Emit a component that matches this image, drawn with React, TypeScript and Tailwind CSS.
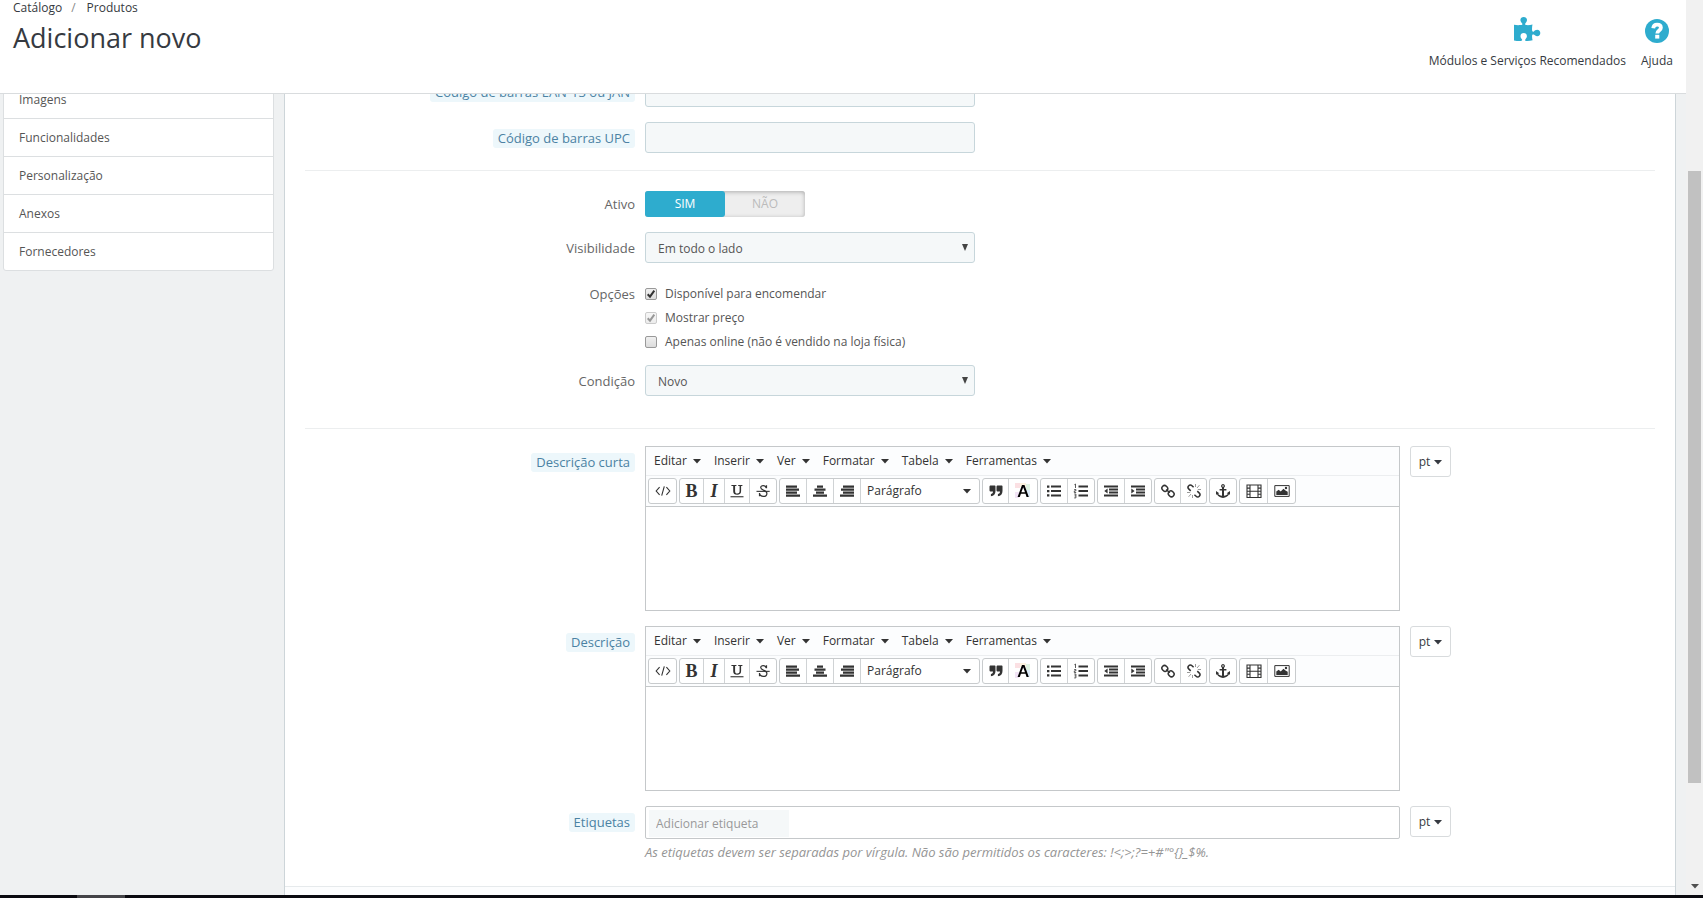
import { ReactNode, useState } from "react";
import clsx from "clsx";

const sidebarTabs = ["Imagens", "Funcionalidades", "Personalização", "Anexos", "Fornecedores"];
const editorMenus = ["Editar", "Inserir", "Ver", "Formatar", "Tabela", "Ferramentas"];

function Caret() {
  return (
    <svg width="8" height="5" viewBox="0 0 8 5" fill="currentColor" aria-hidden="true">
      <path d="M0 0h8L4 4.6z" />
    </svg>
  );
}

function Icon({ children }: { children: ReactNode }) {
  return (
    <svg width="16" height="16" viewBox="0 0 16 16" fill="currentColor" aria-hidden="true">
      {children}
    </svg>
  );
}

const icons = {
  code: (
    <Icon>
      <path d="M4.6 4.2 1.2 8l3.4 3.8M11.4 4.2 14.8 8l-3.4 3.8M9.3 3.4 6.7 12.6" fill="none" stroke="currentColor" strokeWidth="1.1" />
    </Icon>
  ),
  underline: (
    <Icon>
      <path d="M2.4 2h5v.9l-1.3.2v5.1c0 1.7.7 2.4 2.2 2.4s2.3-.8 2.3-2.5V3.1l-1.4-.2V2h4.2v.9l-1.3.2v5c0 2.5-1.3 3.7-3.9 3.7-2.7 0-4-1.1-4-3.5V3.1l-1.8-.2z" />
      <path d="M1.5 13.2h13v1.1h-13z" />
    </Icon>
  ),
  strike: (
    <Icon>
      <path d="M11.3 5.2c-.4-1.7-1.4-2.6-3.1-2.6-1.5 0-2.5.8-2.5 2 0 1.3 1 1.9 2.7 2.5 2.2.8 3.5 1.6 3.5 3.3 0 1.8-1.5 3-3.6 3-2 0-3.5-1.1-3.8-3.2M11.5 2.2v3M4.5 10v3.2" fill="none" stroke="currentColor" strokeWidth="1.2" />
      <path d="M1.5 7.8h13.2v1.1H1.5z" />
    </Icon>
  ),
  left: (
    <Icon>
      <path d="M1 2.5h11v2.2H1zM1 5.500h13v2.200H1zM1 8.500h11v2.200H1zM1 11.500h14v2.200H1z" />
    </Icon>
  ),
  center: (
    <Icon>
      <path d="M5 2.500h6v2.200H5zM2.500 5.500h11v2.200h-11zM4 8.500h8v2.200H4zM1 11.500h14v2.200H1z" />
    </Icon>
  ),
  right: (
    <Icon>
      <path d="M4 2.500h11v2.200H4zM2 5.500h13v2.200H2zM4 8.500h11v2.200H4zM1 11.500h14v2.200H1z" />
    </Icon>
  ),
  quote: (
    <Icon>
      <path d="M2.800 2.500h3.700c.6 0 1 .4 1 1v4.600c0 3-1.700 5-4.600 5.200V11c1.400-.2 2.100-.9 2.100-2.400H2.800c-.8 0-1.300-.5-1.300-1.300V3.800c0-.8.5-1.300 1.300-1.300zM9.800 2.500h3.700c.6 0 1 .4 1 1v4.600c0 3-1.700 5-4.600 5.200V11c1.400-.2 2.100-.9 2.100-2.400H9.800c-.8 0-1.300-.5-1.300-1.300V3.800c0-.8.500-1.300 1.300-1.300z" />
    </Icon>
  ),
  color: (
    <Icon>
      <path d="M0 0h5v5H0z" fill="#fbe0e3" />
      <path d="M5 0h6v4H5z" fill="#fdf3df" />
      <path d="M11 1h4v6h-4z" fill="#e0f4e2" />
      <path d="M11 7h4v7h-4z" fill="#dcebf8" />
      <path d="M0 9h4v6H0z" fill="#f2e4f6" />
      <path d="M7 2h2.500l4.300 12h-2.200l-1.100-3.200H5.900L4.800 14H2.600zm1.200 2.200L6.400 9.200H10z" fill="#000" fillRule="evenodd" />
    </Icon>
  ),
  bullets: (
    <Icon>
      <path d="M1 2.500h2.400v2.300H1zM1 6.900h2.400v2.300H1zM1 11.300h2.400v2.300H1zM5 2.600h10v2H5zM5 7h10v2H5zM5 11.400h10v2H5z" />
    </Icon>
  ),
  numbers: (
    <Icon>
      <path d="M5.500 2.600H15v2H5.500zM5.500 7H15v2H5.500zM5.500 11.400H15v2H5.500z" />
      <path d="M1.400 1.700 2.500 1v4M1.200 6.500h1.700v1.400H1.300v1.600H3.200M1.200 11h1.700v3.900H1.200M1.500 12.900h1.400" fill="none" stroke="currentColor" strokeWidth=".8" />
    </Icon>
  ),
  outdent: (
    <Icon>
      <path d="M1 2.500h14v1.900H1zM6 5.500h9v1.900H6zM6 8.500h9v1.900H6zM1 11.500h14v1.900H1zM4.600 5.400v5.200L1.300 8z" />
    </Icon>
  ),
  indent: (
    <Icon>
      <path d="M1 2.500h14v1.900H1zM6 5.500h9v1.900H6zM6 8.500h9v1.900H6zM1 11.500h14v1.900H1zM1.300 5.400v5.200L4.600 8z" />
    </Icon>
  ),
  link: (
    <Icon>
      <g fill="none" stroke="currentColor" strokeWidth="1.500">
        <rect x="2.200" y="2.400" width="5.200" height="6" rx="2.600" transform="rotate(-45 4.800 5.400)" />
        <rect x="8.600" y="7.800" width="5.200" height="6" rx="2.600" transform="rotate(-45 11.200 10.800)" />
        <path d="m6.200 6.500 3.600 3.300" />
      </g>
    </Icon>
  ),
  unlink: (
    <Icon>
      <g fill="none" stroke="currentColor" strokeWidth="1.500">
        <path d="M7.600 4.300 6 2.700c-1-1-2.400-1-3.300 0-.9.900-.9 2.200 0 3.200l2 2M8.400 11.700l1.700 1.600c1 1 2.300 1 3.200 0 .9-.9.900-2.200 0-3.200l-2-2" />
        <path d="M9.500 4V1M11 5l2.400-2.800M11.800 6.500H15M6.500 12v3M5 11l-2.400 2.800M4.200 9.500H1" strokeWidth=".7" opacity=".7" />
      </g>
    </Icon>
  ),
  anchor: (
    <Icon>
      <path d="M8 1a2 2 0 0 0-1 3.700V6H4.600v1.500H7v5.300c-2-.2-3.400-1-3.900-2l1.200-.6L1 8v3.800l1-.5C3 13.400 5.200 14.600 8 15c2.800-.4 5-1.600 6-3.700l1 .5V8l-3.300 2.200 1.200.6c-.5 1-1.900 1.800-3.900 2V7.500h2.400V6H9V4.700A2 2 0 0 0 8 1zm0 1.200a.8.8 0 1 1 0 1.600.8.800 0 0 1 0-1.600z" fillRule="evenodd" />
    </Icon>
  ),
  film: (
    <Icon>
      <path d="M1 2h14v12.500H1zM4 2v12.500M12 2v12.500M4 8.200h8M1 5.100h3M1 8.200h3M1 11.300h3M12 5.100h3M12 8.200h3M12 11.300h3" fill="none" stroke="currentColor" strokeWidth="1.100" />
    </Icon>
  ),
  image: (
    <Icon>
      <path d="M.8 2.600h14.400v10.800H.8z" fill="none" stroke="currentColor" />
      <path d="M2.300 12V8.600l2.400-1.800 2 1.700 2.800-2.700 2 1.800 2.200 1.200V12z" />
      <circle cx="12" cy="5" r="1.200" />
    </Icon>
  ),
  bold: <span className="font-['Liberation_Serif'] text-lg leading-none font-bold">B</span>,
  italic: <span className="font-['Liberation_Serif'] text-lg leading-none font-bold italic">I</span>,
};

type Tool = { label: string; icon: ReactNode; width: string };

const toolGroups: Tool[][] = [
  [{ label: "Código fonte", icon: icons.code, width: "w-[27px]" }],
  [
    { label: "Negrito", icon: icons.bold, width: "w-6" },
    { label: "Itálico", icon: icons.italic, width: "w-[21px]" },
    { label: "Sublinhado", icon: icons.underline, width: "w-[25px]" },
    { label: "Rasurado", icon: icons.strike, width: "w-[26px]" },
  ],
  [
    { label: "Alinhar à esquerda", icon: icons.left, width: "w-[27px]" },
    { label: "Alinhar ao centro", icon: icons.center, width: "w-[27px]" },
    { label: "Alinhar à direita", icon: icons.right, width: "w-[27px]" },
    {
      label: "Formatos",
      icon: (
        <span className="flex w-full items-center justify-between pr-2 pl-1.5">
          Parágrafo <Caret />
        </span>
      ),
      width: "w-[118px]",
    },
  ],
  [
    { label: "Citação", icon: icons.quote, width: "w-[26px]" },
    { label: "Cor do texto", icon: icons.color, width: "w-7" },
  ],
  [
    { label: "Lista", icon: icons.bullets, width: "w-[27px]" },
    { label: "Lista numerada", icon: icons.numbers, width: "w-[26px]" },
  ],
  [
    { label: "Diminuir avanço", icon: icons.outdent, width: "w-[27px]" },
    { label: "Aumentar avanço", icon: icons.indent, width: "w-[26px]" },
  ],
  [
    { label: "Inserir link", icon: icons.link, width: "w-[26px]" },
    { label: "Remover link", icon: icons.unlink, width: "w-[25px]" },
  ],
  [{ label: "Âncora", icon: icons.anchor, width: "w-[26px]" }],
  [
    { label: "Inserir vídeo", icon: icons.film, width: "w-7" },
    { label: "Inserir imagem", icon: icons.image, width: "w-[27px]" },
  ],
];

function Row({ label, htmlFor, hint, short, children }: { label: string; htmlFor?: string; hint?: boolean; short?: boolean; children: ReactNode }) {
  return (
    <div className="-mx-[5px] mb-[15px] flex">
      <div className={clsx("w-1/4 shrink-0 px-[5px] text-right text-[13px] leading-[19px]", short ? "pt-1" : "pt-[7px]")}>
        <label htmlFor={htmlFor} className={hint ? "inline-block rounded-[3px] bg-[#edf7fb] px-[5px] text-[#4b82a3]" : "text-[#666]"}>
          {label}
        </label>
      </div>
      <div className="flex w-3/4">{children}</div>
    </div>
  );
}

function TextField({ id }: { id: string }) {
  return (
    <div className="w-1/3 px-[5px]">
      <input id={id} type="text" className="block h-[31px] w-full rounded-[3px] border border-[#c7d6db] bg-[#f5f8f9] px-2 text-xs" />
    </div>
  );
}

function SelectField({ id, options }: { id: string; options: string[] }) {
  return (
    <div className="relative w-1/3 px-[5px]">
      <select id={id} className="block h-[31px] w-full appearance-none rounded-[3px] border border-[#c7d6db] bg-[#f5f8f9] px-3 pt-0.5 text-xs text-[#555]">
        {options.map((o) => (
          <option key={o}>{o}</option>
        ))}
      </select>
      <svg className="pointer-events-none absolute top-3 right-3" width="6" height="7" viewBox="0 0 6 7" fill="#444" aria-hidden="true">
        <path d="M0 0h6L3 7z" />
      </svg>
    </div>
  );
}

function CheckOption({ label, checked, disabled }: { label: string; checked?: boolean; disabled?: boolean }) {
  return (
    <label className="flex h-6 items-center gap-2 pt-[7px] text-xs leading-[17px] text-[#555]">
      <span className={clsx("relative block size-3", disabled && "opacity-50")}>
        <input
          type="checkbox"
          defaultChecked={checked}
          disabled={disabled}
          className="peer block size-3 appearance-none rounded-xs border border-[#999] bg-linear-to-b from-[#f0f0f0] to-[#dcdcdc]"
        />
        <svg className="pointer-events-none absolute inset-0 hidden peer-checked:block" width="12" height="12" viewBox="0 0 12 12" fill="none" aria-hidden="true">
          <path d="M2.700 6.200 5 8.600l4.300-6" stroke="#333" strokeWidth="2" />
        </svg>
      </span>
      {label}
    </label>
  );
}

function LangButton() {
  return (
    <div className="px-[5px]">
      <button type="button" className="flex h-[31px] w-[41px] items-center justify-center gap-1 rounded-[3px] border border-[#d8dbdd] bg-white pt-px text-xs text-[#363a41]">
        pt <Caret />
      </button>
    </div>
  );
}

function Editor({ id }: { id: string }) {
  return (
    <div className="w-3/4 px-[5px]">
      <div className="border border-[#c5c8ca] text-xs text-[#333]">
        <div className="flex h-7 gap-[13px] bg-[#fcfdfe] px-2">
          {editorMenus.map((menu) => (
            <button key={menu} type="button" className="flex items-center gap-[6px]">
              {menu} <Caret />
            </button>
          ))}
        </div>
        <div className="flex gap-0.5 border-y border-t-[#eceef0] border-b-[#c5c8ca] bg-[#fcfdfe] px-0.5 py-0.5">
          {toolGroups.map((group, i) => (
            <div key={i} className="flex h-[26px] divide-x divide-[#d0d3d5] rounded-[3px] border border-[#c8cbcd] bg-white">
              {group.map((tool) => (
                <button key={tool.label} type="button" aria-label={tool.label} className={clsx("flex items-center justify-center", tool.width)}>
                  {tool.icon}
                </button>
              ))}
            </div>
          ))}
        </div>
        <textarea id={id} className="block h-[103px] w-full resize-none bg-white p-2 outline-none" />
      </div>
    </div>
  );
}

export default function App() {
  const [active, setActive] = useState(true);

  return (
    <div className="flex h-screen flex-col overflow-hidden bg-[#eff1f2] font-['Open_Sans',sans-serif]">
      <div className="flex min-h-0 flex-1">
        <div className="flex min-w-0 flex-1 flex-col">
          <header className="flex h-[94px] shrink-0 justify-between border-b border-[#d9dcde] bg-white px-[13px] text-xs text-[#363a41]">
            <div>
              <nav className="flex h-4 items-center gap-[9px]">
                <a href="#catalogo">Catálogo</a>
                <span className="text-[#888]">/</span>
                <a href="#produtos" className="pl-0.5">Produtos</a>
              </nav>
              <h1 className="mt-1 text-[27px] leading-9">Adicionar novo</h1>
            </div>
            <div className="flex gap-[15px] pt-4">
              <a href="#modulos" className="flex flex-col items-center gap-[9px]">
                <svg width="28" height="28" viewBox="0 0 28 28" fill="#2eacce" aria-hidden="true">
                  <path d="M1 8.800c2.200.5 4.500.5 7 .3 1.300-.1 1.700-.6 1.200-1.500C8.500 6.600 7.400 5.800 7.400 4.100 7.400 2.200 8.900 1 10.700 1s3.300 1.200 3.300 3.100c0 1.700-1.100 2.500-1.700 3.500-.5.900 0 1.400 1.300 1.500 2 .1 4-.1 5.900-.6-.4 2-.6 3.600-.4 5.800.1 1.300.8 1.700 1.700 1.100 1-.6 1.700-1.600 3.400-1.600 1.900 0 3.100 1.300 3.100 3.200s-1.200 3.200-3.100 3.200c-1.700 0-2.400-1-3.400-1.600-.9-.5-1.600-.1-1.700 1.200-.1 1.700.100 3 .5 4.500-2 .5-4 .8-6.300.7-1.200-.1-1.500-.7-1-1.600.6-1 1.600-1.500 1.600-3.200 0-1.900-1.300-3.100-3.200-3.100s-3.200 1.200-3.200 3.100c0 1.700 1 2.300 1.500 3.200.5.900.1 1.500-1.100 1.600-2.300.1-4.400 0-6.900-.5z" />
                </svg>
                <span className="leading-4">Módulos e Serviços Recomendados</span>
              </a>
              <a href="#ajuda" className="flex flex-col items-center gap-[9px]">
                <svg width="28" height="28" viewBox="0 0 28 28" aria-hidden="true">
                  <circle cx="14" cy="15" r="12" fill="#2eacce" />
                  <path d="M10.200 12.200c.3-2.400 1.700-3.500 3.900-3.500 2.300 0 3.800 1.200 3.800 3.100 0 2.900-3.600 2.700-3.600 5.700" fill="none" stroke="#fff" strokeWidth="3.800" />
                  <path d="M12.200 18.800h4.100v3.800h-4.100z" fill="#fff" />
                </svg>
                <span className="leading-4">Ajuda</span>
              </a>
            </div>
          </header>

          <main className="flex min-h-0 flex-1 overflow-hidden pr-2.5 pl-[3px]">
            {/* page is scrolled down, so both columns start above the header edge */}
            <nav className="-mt-[14px] mr-[10px] w-[271px] shrink-0">
              <ul className="divide-y divide-[#dcdfe1] rounded-[3px] border border-[#dcdfe1] bg-white">
                {sidebarTabs.map((tab) => (
                  <li key={tab}>
                    <a href={`#${tab}`} className="flex h-[37px] items-center px-[15px] text-xs text-[#555]">
                      {tab}
                    </a>
                  </li>
                ))}
              </ul>
            </nav>

            <form className="flex min-w-0 flex-1 flex-col border-x border-[#cdd5d9] bg-white">
              <div className="-mt-[18px] flex-1 px-5">
                <Row label="Código de barras EAN-13 ou JAN" htmlFor="ean13" hint>
                  <TextField id="ean13" />
                </Row>
                <Row label="Código de barras UPC" htmlFor="upc" hint>
                  <TextField id="upc" />
                </Row>

                <hr className="mt-[17px] mb-5 border-[#eceeef]" />

                <Row label="Ativo" short>
                  <div className="px-[5px]">
                    <div className="flex h-[26px] w-40 rounded-[3px] bg-[#eee] text-center text-xs leading-[25px] shadow-[inset_0_1px_4px_#aaa]">
                      <label className={clsx("w-1/2 rounded-[3px]", active ? "bg-[#2eacce] font-medium text-white" : "text-[#bbb]")}>
                        <input type="radio" name="active" className="sr-only" checked={active} onChange={() => setActive(true)} />
                        SIM
                      </label>
                      <label className={clsx("w-1/2 rounded-[3px]", !active ? "bg-[#2eacce] font-medium text-white" : "text-[#bbb]")}>
                        <input type="radio" name="active" className="sr-only" checked={!active} onChange={() => setActive(false)} />
                        NÃO
                      </label>
                    </div>
                  </div>
                </Row>
                <Row label="Visibilidade" htmlFor="visibility">
                  <SelectField id="visibility" options={["Em todo o lado", "Apenas catálogo", "Apenas pesquisa", "Nenhum lado"]} />
                </Row>
                <Row label="Opções">
                  <div className="px-[5px]">
                    <CheckOption label="Disponível para encomendar" checked />
                    <CheckOption label="Mostrar preço" checked disabled />
                    <CheckOption label="Apenas online (não é vendido na loja física)" />
                  </div>
                </Row>
                <Row label="Condição" htmlFor="condition">
                  <SelectField id="condition" options={["Novo", "Usado", "Recondicionado"]} />
                </Row>

                <hr className="mt-8 mb-[17px] border-[#eceeef]" />

                <Row label="Descrição curta" htmlFor="description_short" hint>
                  <Editor id="description_short" />
                  <LangButton />
                </Row>
                <Row label="Descrição" htmlFor="description" hint>
                  <Editor id="description" />
                  <LangButton />
                </Row>
                <Row label="Etiquetas" htmlFor="tags" hint>
                  <div className="w-3/4 px-[5px]">
                    <div className="h-[33px] rounded-xs border border-[#c5c8ca] bg-white p-[3px]">
                      <input id="tags" type="text" placeholder="Adicionar etiqueta" className="block h-[27px] w-[140px] bg-[#f5f8f9] px-[7px] text-xs placeholder:text-[#999]" />
                    </div>
                    <p className="mt-1 text-[13px] leading-[18px] text-[#959595] italic">
                      As etiquetas devem ser separadas por vírgula. Não são permitidos os caracteres: {'!<;>;?=+#"°{}_$%.'}
                    </p>
                  </div>
                  <LangButton />
                </Row>
              </div>
              <div className="h-[9px] shrink-0 border-t border-[#e6eaec] bg-[#fcfdfe]" />
            </form>
          </main>
        </div>

        <div className="flex w-[17px] shrink-0 flex-col items-center bg-[#f1f1f1] pt-[171px] pb-[6px]">
          <div className="h-[612px] w-[13px] shrink-0 bg-[#c1c1c1]" />
          <div className="mt-auto text-[#505050]">
            <Caret />
          </div>
        </div>
      </div>
      <div className="h-[3px] shrink-0 bg-[#0a0a10]">
        <div className="ml-[77px] h-full w-12 bg-[#444448]" />
      </div>
    </div>
  );
}
